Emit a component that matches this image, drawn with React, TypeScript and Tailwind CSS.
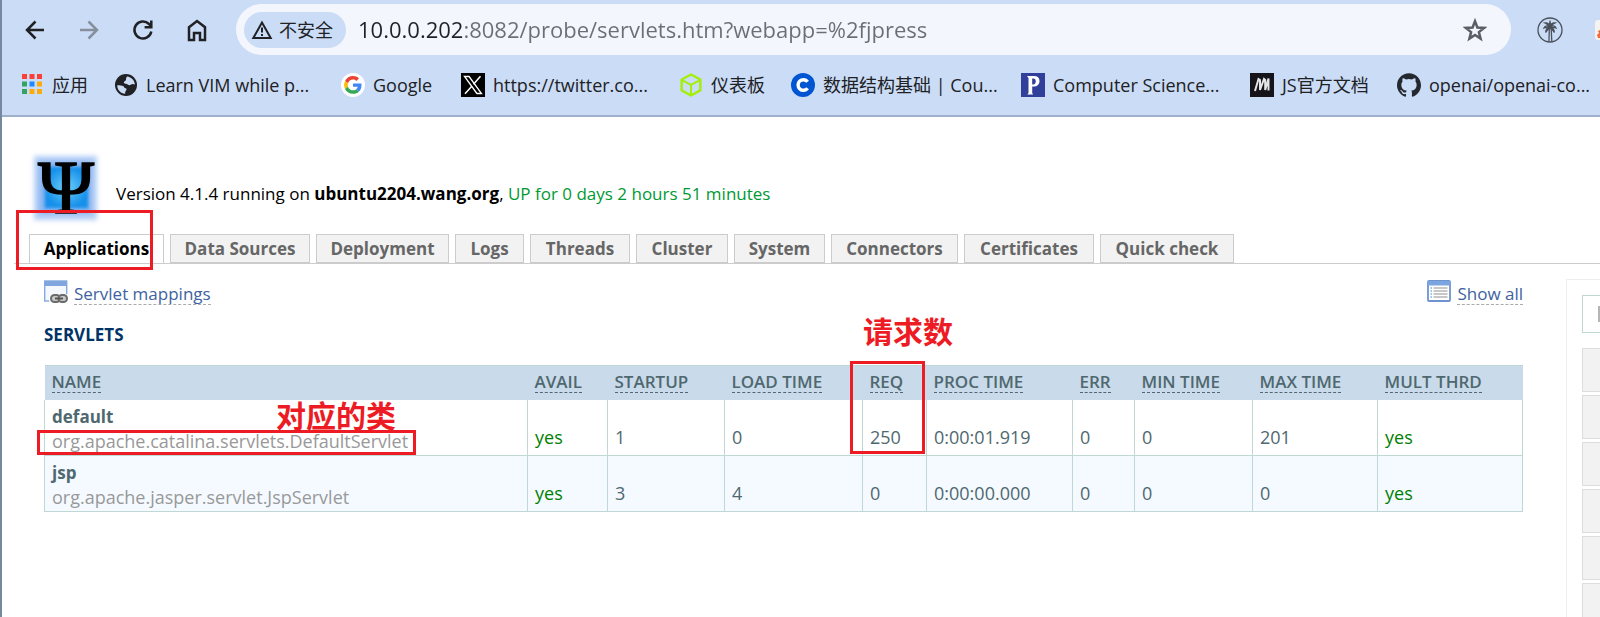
import React from 'react';

const bookmarks = [
  { icon: 'apps', label: '应用', w: 'w-9' },
  { icon: 'globe', label: 'Learn VIM while p...', w: 'w-[169px]' },
  { icon: 'google', label: 'Google', w: 'w-[62px]' },
  { icon: 'x', label: 'https://twitter.co...', w: 'w-[160px]' },
  { icon: 'cube', label: '仪表板', w: 'w-[54px]' },
  { icon: 'coursera', label: '数据结构基础 | Cou...', w: 'w-[172px]' },
  { icon: 'p', label: 'Computer Science...', w: 'w-[171px]' },
  { icon: 'm', label: 'JS官方文档', w: 'w-[89px]' },
  { icon: 'github', label: 'openai/openai-co...', w: 'w-[168px]' },
];

const tabs = [
  ['Applications', 'w-[135px]'],
  ['Data Sources', 'w-[140px]'],
  ['Deployment', 'w-[133px]'],
  ['Logs', 'w-[69px]'],
  ['Threads', 'w-[100px]'],
  ['Cluster', 'w-[92px]'],
  ['System', 'w-[91px]'],
  ['Connectors', 'w-[127px]'],
  ['Certificates', 'w-[130px]'],
  ['Quick check', 'w-[134px]'],
];

const columns = [
  ['NAME', 'w-[483px]'],
  ['AVAIL', 'w-20'],
  ['STARTUP', 'w-[117px]'],
  ['LOAD TIME', 'w-[138px]'],
  ['REQ', 'w-16'],
  ['PROC TIME', 'w-[146px]'],
  ['ERR', 'w-[62px]'],
  ['MIN TIME', 'w-[118px]'],
  ['MAX TIME', 'w-[125px]'],
  ['MULT THRD', 'w-[145px]'],
];

const rows = [
  {
    name: 'default',
    cls: 'org.apache.catalina.servlets.DefaultServlet',
    cells: ['yes', '1', '0', '250', '0:00:01.919', '0', '0', '201', 'yes'],
  },
  {
    name: 'jsp',
    cls: 'org.apache.jasper.servlet.JspServlet',
    cells: ['yes', '3', '4', '0', '0:00:00.000', '0', '0', '0', 'yes'],
  },
];

function BookmarkIcon({ name }: { name: string }) {
  switch (name) {
    case 'apps': {
      const colors = ['#fb4036', '#fb4036', '#fb4036', '#34a261', '#1a8cff', '#fbab0c', '#34a261', '#fbab0c', '#fbab0c'];
      return (
        <svg viewBox="0 0 24 24" className="size-6">
          {colors.map((c, i) => (
            <rect key={i} x={2 + (i % 3) * 7.5} y={1 + Math.floor(i / 3) * 7.5} width="5" height="5" fill={c} />
          ))}
        </svg>
      );
    }
    case 'globe':
      return (
        <svg viewBox="0 0 24 24" className="size-6">
          <circle cx="12" cy="12" r="11" fill="#202124" />
          <path
            d="M13 3.500c4.500.5 7.600 4 7.900 8-1.500-.8-3-.9-3.900.1-1 1-2.400.6-3.300-.1-1.200-1-3-.3-3.700-1.500-.6-1.200.8-1.700 1.700-2.500.8-.8-.2-2.400 1.300-4zM3.200 12.200c2.400.1 4.800-.1 6.300 1.100 1 .9.6 1.700 1.900 2 1.400.2 1.600 1.300.6 2.300-.9.8-.6 2-.9 3.200-4.500-.4-7.800-4-7.900-8.600z"
            fill="#cbdcf6"
          />
        </svg>
      );
    case 'google':
      return (
        <svg viewBox="0 0 24 24" className="size-6">
          <circle cx="12" cy="12" r="12" fill="#fff" />
          <g transform="translate(3.100 3.100) scale(.37)">
            <path fill="#EA4335" d="M24 9.500c3.540 0 6.710 1.220 9.210 3.600l6.850-6.850C35.900 2.380 30.470 0 24 0 14.620 0 6.510 5.380 2.560 13.220l7.980 6.190C12.430 13.720 17.740 9.500 24 9.500z" />
            <path fill="#4285F4" d="M46.980 24.550c0-1.570-.15-3.090-.38-4.550H24v9.020h12.940c-.58 2.960-2.260 5.480-4.780 7.180l7.730 6c4.510-4.180 7.090-10.360 7.090-17.650z" />
            <path fill="#FBBC05" d="M10.530 28.590c-.48-1.450-.76-2.990-.76-4.590s.27-3.140.76-4.590l-7.980-6.190C.92 16.460 0 20.120 0 24c0 3.880.92 7.540 2.560 10.780l7.970-6.190z" />
            <path fill="#34A853" d="M24 48c6.480 0 11.930-2.130 15.890-5.810l-7.730-6c-2.150 1.450-4.920 2.300-8.160 2.300-6.260 0-11.570-4.220-13.470-9.910l-7.980 6.190C6.510 42.620 14.620 48 24 48z" />
          </g>
        </svg>
      );
    case 'x':
      return (
        <svg viewBox="0 0 24 24" className="size-6">
          <rect width="24" height="24" fill="#000" />
          <path d="M3.500 3.500h4.600l12.400 17h-4.600z" fill="none" stroke="#fff" strokeWidth="1.300" />
          <path d="M19.500 3.200l-7 8M10.800 13.300l-6.800 7.500" stroke="#fff" strokeWidth="1.500" />
        </svg>
      );
    case 'cube':
      return (
        <svg viewBox="0 0 24 24" className="size-6" fill="none" stroke="#a3ef0b" strokeWidth="2.500" strokeLinejoin="round">
          <path d="M12 1.500l9.300 5v10.800L12 22.500l-9.300-5.200V6.500z" />
          <path d="M3.500 7.300L12 11.800l8.500-4.500M12 11.800V22" strokeWidth="2" />
        </svg>
      );
    case 'coursera':
      return (
        <svg viewBox="0 0 24 24" className="size-6">
          <circle cx="12" cy="12" r="12" fill="#0056d2" />
          <path d="M16.600 8.800a5.300 5.300 0 1 0 0 6.400" fill="none" stroke="#fff" strokeWidth="3.400" />
        </svg>
      );
    case 'p':
      return (
        <svg viewBox="0 0 24 24" className="size-6">
          <rect width="24" height="24" fill="#303f9a" />
          <path d="M6 3h7c3.500 0 5.500 1.700 5.500 5 0 3.500-2.200 5.600-5.800 5.600h-1.500V20l.9 1.500H6.300L7.500 20V5z" fill="#fff" />
          <path d="M11.200 5.500h1c1.700 0 2.500.9 2.500 2.800 0 2-.8 3.100-2.600 3.100h-.9z" fill="#303f9a" />
        </svg>
      );
    case 'm':
      return (
        <svg viewBox="0 0 24 24" className="size-6">
          <rect width="24" height="24" fill="#15141a" />
          <path d="M5 18L8.500 6l1.500 1v10l4-11 1.200 1v10l3.300-11.500v12" fill="none" stroke="#e4e4e6" strokeWidth="2" />
        </svg>
      );
    default:
      return (
        <svg viewBox="0 0 24 24" className="size-6">
          <path
            fill="#24292f"
            d="M12 .3C5.370.3 0 5.670 0 12.300c0 5.300 3.440 9.800 8.210 11.390.6.110.82-.26.82-.58 0-.29-.01-1.040-.02-2.040-3.340.73-4.040-1.610-4.040-1.610-.55-1.390-1.330-1.760-1.330-1.760-1.090-.74.08-.73.08-.73 1.210.08 1.840 1.240 1.840 1.240 1.070 1.830 2.810 1.300 3.490 1 .11-.78.42-1.310.76-1.610-2.670-.3-5.470-1.330-5.470-5.930 0-1.310.47-2.380 1.240-3.220-.14-.3-.54-1.520.1-3.180 0 0 1.010-.32 3.300 1.230a11.500 11.500 0 0 1 6 0c2.280-1.550 3.290-1.230 3.290-1.230.64 1.660.24 2.880.12 3.180.77.84 1.230 1.910 1.230 3.220 0 4.610-2.800 5.630-5.480 5.920.42.36.81 1.100.81 2.220 0 1.610-.01 2.900-.01 3.290 0 .32.21.7.82.58C20.570 22.100 24 17.600 24 12.300c0-6.630-5.370-12-12-12"
          />
        </svg>
      );
  }
}

function NavButton({ label, dim, children }: { label: string; dim?: boolean; children: React.ReactNode }) {
  return (
    <button
      aria-label={label}
      className={`flex h-[51px] w-[54px] items-center justify-center ${dim ? 'text-[#878f9e]' : 'text-[#202124]'}`}
    >
      <svg viewBox="0 0 24 24" className="size-6" fill="none" stroke="currentColor" strokeWidth="2.500">
        {children}
      </svg>
    </button>
  );
}

function Toolbar() {
  return (
    <div className="flex items-center pt-1 pl-[6px]">
      <NavButton label="Back">
        <path d="M21 12H4.500M12.500 3.500L4 12l8.500 8.500" />
      </NavButton>
      <NavButton label="Forward" dim>
        <path d="M3 12h16.500M11.500 3.500L20 12l-8.500 8.500" />
      </NavButton>
      <NavButton label="Reload">
        <path d="M20.300 13.500A8.500 8.500 0 1 1 18 6l2 2.200M20.300 2.500v6.700h-6.700" />
      </NavButton>
      <NavButton label="Home">
        <path d="M4 9.200L12 3l8 6.200V22h-5v-7H9v7H4z" />
      </NavButton>
      <div className="ml-3 flex h-[51px] flex-1 items-center rounded-full bg-[#f3f7fd] pr-6 pl-2">
        <button className="flex h-9 w-[102px] items-center gap-[6px] rounded-full bg-[#cbdcf6] pl-[7px] text-lg text-[#202124]">
          <svg viewBox="0 0 22 20" className="h-5 w-[22px] shrink-0" fill="none" stroke="currentColor" strokeWidth="2">
            <path d="M11 2.500L2.300 18h17.400z" />
            <path d="M11 7.500v5M11 14v2" />
          </svg>
          <span className="whitespace-nowrap">不安全</span>
        </button>
        <input
          aria-label="Address"
          defaultValue="10.0.0.202:8082/probe/servlets.htm?webapp=%2fjpress"
          className="ml-3 flex-1 bg-[linear-gradient(to_right,#202124_105px,#6a6e75_105px)] bg-clip-text text-[22px] text-transparent outline-none"
        />
        <button aria-label="Bookmark this page">
          <svg viewBox="0 0 24 24" className="size-6" fill="none" stroke="#5b5e64" strokeWidth="2.500">
            <path d="M12 3.200l2.400 6.300 6.700.4-5.200 4.200 1.700 6.500L12 17l-5.600 3.600 1.700-6.500-5.200-4.200 6.700-.4z" />
          </svg>
        </button>
      </div>
      <button aria-label="Palm extension" className="ml-[26px]">
        <svg viewBox="0 0 26 26" className="size-[26px]" fill="none" stroke="#4a505a" strokeWidth="1.300">
          <circle cx="13" cy="13" r="12" />
          <path d="M12 24.500l.3-13M14.800 24.500l-.6-13" />
          <path d="M13 10.500C11 8 8 8.500 7 11c2-.8 4-.5 6-.5zM13 10.500c2-2.500 5-2 6 .5-2-.8-4-.5-6-.5zM13 10c-.5-3-2.500-4.500-5-4 2 .7 3.500 2 5 4zM13 10c.5-3 2.500-4.500 5-4-2 .7-3.500 2-5 4zM12.700 11c-2.500.3-4 2-4 4.500 1-2 2.500-3 4-4.500zM13.300 11c2.500.3 4 2 4 4.500-1-2-2.500-3-4-4.500zM13 9.500c-.8-2-.6-3.500 0-5 .6 1.500.8 3 0 5z" />
        </svg>
      </button>
      <button aria-label="Second extension" className="ml-8">
        <svg viewBox="0 0 5 20" className="h-5 w-[5px]">
          <path d="M5 0H3Q0 0 0 3v14q0 3 3 3h2z" fill="#f6f2f0" />
          <path d="M5 10L3 11l1 2-2 2 1 3h2z" fill="#ef6a3c" />
        </svg>
      </button>
    </div>
  );
}

function ProbeLogo() {
  return (
    <svg viewBox="0 0 70 70" className="size-[70px] overflow-visible" role="img" aria-label="Probe">
      <defs>
        <radialGradient id="core">
          <stop offset="0" stopColor="#6fd0fb" />
          <stop offset="1" stopColor="#1590ea" />
        </radialGradient>
        <filter id="glow" x="-30%" y="-30%" width="160%" height="160%">
          <feGaussianBlur stdDeviation="2.500" />
        </filter>
        <filter id="soft">
          <feGaussianBlur stdDeviation="1.500" />
        </filter>
      </defs>
      <rect x="4" y="3" width="63" height="64" fill="#b4cdf6" filter="url(#glow)" />
      <rect x="10" y="9" width="51" height="51" fill="#7fb0f2" filter="url(#glow)" />
      <rect x="15" y="14" width="43" height="41" fill="url(#core)" filter="url(#soft)" />
      <text
        x="36"
        y="60"
        textAnchor="middle"
        fontSize="76"
        fontFamily="Liberation Serif, serif"
        fill="#000"
        stroke="#000"
        strokeWidth="1.500"
      >
        Ψ
      </text>
    </svg>
  );
}

function MappingIcon() {
  return (
    <svg viewBox="0 0 24 24" className="size-6">
      <rect x=".7" y="1" width="22" height="20" fill="#f4f8fe" stroke="#85a9de" strokeWidth="1.400" />
      <rect x="1" y="1" width="21.500" height="5" fill="#7fa6df" />
      <path d="M5 24v-7l4-3h15v10z" fill="#fff" opacity=".8" />
      <rect x="7" y="15" width="9" height="7" rx="3.500" fill="#c9c9c9" stroke="#6b6b6b" strokeWidth="2" />
      <rect x="14.500" y="15" width="8.500" height="7" rx="3.500" fill="#c9c9c9" stroke="#6b6b6b" strokeWidth="2" />
      <path d="M11 18.500h8" stroke="#555" strokeWidth="2" />
    </svg>
  );
}

function ListIcon() {
  return (
    <svg viewBox="0 0 24 22" className="h-[22px] w-6">
      <rect x="1" y="1" width="22" height="20" rx="1" fill="#fff" stroke="#6f93cf" strokeWidth="1.800" />
      <rect x="1" y="1" width="22" height="4.500" fill="#7ba5e0" />
      <path d="M6.500 8h14M6.500 11h14M6.500 14h14M6.500 17h14" stroke="#b5b5b5" strokeWidth="1.500" />
      <path d="M3.500 8H5M3.500 11H5M3.500 14H5M3.500 17H5" stroke="#6fb4f0" strokeWidth="1.500" />
    </svg>
  );
}

export default function App() {
  return (
    <div className="relative flex min-h-screen flex-col overflow-hidden border-l-2 border-[#75889f] bg-white font-['Open_Sans','Noto_Sans_CJK_SC',sans-serif]">
      <header className="border-b-2 border-[#9fb0ca] bg-[#cbdcf6]">
        <Toolbar />
        <nav className="flex h-[60px] items-center gap-[26px] pl-[18px]">
          {bookmarks.map((b) => (
            <a key={b.label} href="#" className="flex shrink-0 items-center gap-2 text-lg text-[#202124]">
              <BookmarkIcon name={b.icon} />
              <span className={`whitespace-nowrap ${b.w}`}>{b.label}</span>
            </a>
          ))}
        </nav>
      </header>

      <div className="flex items-end gap-4 pt-9 pl-7">
        <ProbeLogo />
        <p className="pb-[17px] text-[17px] leading-6 text-black">
          Version 4.1.4 running on <b className="font-bold">ubuntu2204.wang.org</b>,{' '}
          <span className="text-[#009933]">UP for 0 days 2 hours 51 minutes</span>
        </p>
      </div>

      <nav className="ml-3 flex gap-[6px] border-b border-[#ccc] pt-[11px] pl-[15px]">
        {tabs.map(([label, w], i) => (
          <a
            key={label}
            href="#"
            className={`flex h-[29px] items-center justify-center border-[#ccc] text-[17px] leading-6 font-bold ${w} ${
              i ? 'border bg-[#f2f2f2] text-[#666]' : 'border border-b-0 bg-white text-black'
            }`}
          >
            {label}
          </a>
        ))}
      </nav>

      <div className="flex flex-1">
        <main className="flex-1 pt-4 pr-[43px] pl-[42px] text-[#4f686f]">
          <div className="flex justify-between text-[17px] leading-5 text-[#3d629f]">
            <a href="#" className="flex items-start gap-[6px]">
              <MappingIcon />
              <span className="mt-1 border-b border-dashed border-[#aaa]">Servlet mappings</span>
            </a>
            <a href="#" className="flex items-start gap-[6px]">
              <ListIcon />
              <span className="mt-1 border-b border-dashed border-[#aaa]">Show all</span>
            </a>
          </div>
          <h3 className="mt-5 text-[17px] leading-5 font-bold text-[#003366]">SERVLETS</h3>
          <table className="mt-5 w-full table-fixed border-collapse text-lg leading-6">
            <thead>
              <tr className="border-t border-[#bfd8d4] bg-[#c9daea]">
                {columns.map(([label, w]) => (
                  <th key={label} className={`h-[34px] px-[7px] pt-[6px] text-left align-top text-[17px] leading-5 font-semibold ${w}`}>
                    <a href="#" className="block w-fit border-b border-dashed border-[#4f686f]">
                      {label}
                    </a>
                  </th>
                ))}
              </tr>
            </thead>
            <tbody>
              {rows.map((row) => (
                <tr key={row.name} className="even:bg-[#f4faff]">
                  <td className="border border-t-0 border-[#bfd8d4] px-[7px] pt-[5px] pb-[2px]">
                    <div className="text-[17px] leading-6 font-bold">{row.name}</div>
                    <div className="text-[#999]">{row.cls}</div>
                  </td>
                  {row.cells.map((cell, i) => (
                    <td
                      key={i}
                      className={`border border-t-0 border-[#bfd8d4] px-[7px] pb-[6px] align-bottom ${cell === 'yes' ? 'text-[#008000]' : ''}`}
                    >
                      {cell}
                    </td>
                  ))}
                </tr>
              ))}
            </tbody>
          </table>
        </main>

        <aside className="mt-[15px] -mb-40 h-[500px] w-[34px] shrink-0 border-t border-l border-[#eee] pt-[15px] pl-[15px]">
          <div className="flex h-[38px] items-center justify-end border border-r-0 border-[#bfd8d4]">
            <span className="h-4 w-[2px] bg-[#b5b5b5]" />
          </div>
          <div className="mt-[15px] flex flex-col gap-[3px]">
            {[0, 1, 2, 3, 4, 5].map((i) => (
              <div key={i} className="h-11 border border-r-0 border-[#ddd] bg-[#f2f2f2]" />
            ))}
          </div>
        </aside>
      </div>

      <div className="absolute top-[210px] left-[14px] h-[60px] w-[137px] border-3 border-[#ed1c24]" />
      <div className="absolute top-[430px] left-[35px] h-[25px] w-[379px] border-3 border-[#ed1c24]" />
      <div className="absolute top-[361px] left-[848px] h-[93px] w-[75px] border-3 border-[#ed1c24]" />
      <span className="absolute top-[400px] left-[274px] text-[30px] leading-8 font-bold whitespace-nowrap text-[#ed1c24]">对应的类</span>
      <span className="absolute top-[316px] left-[861px] text-[30px] leading-8 font-bold whitespace-nowrap text-[#ed1c24]">请求数</span>
    </div>
  );
}
